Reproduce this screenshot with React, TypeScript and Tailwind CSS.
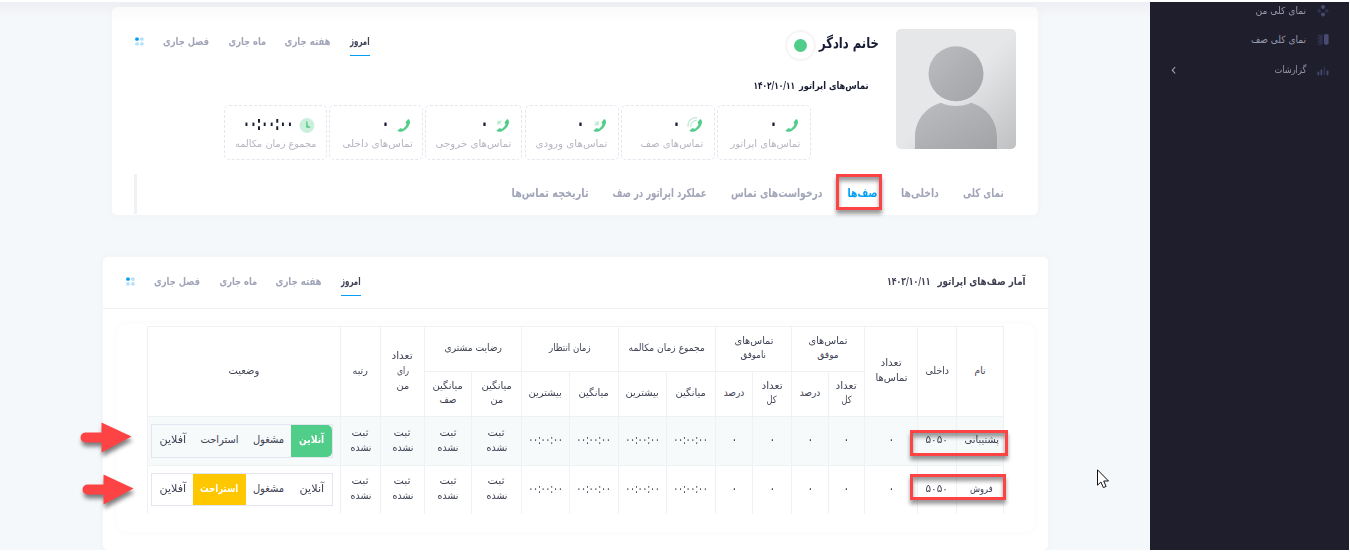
import { useLayoutEffect, useRef, useState } from "react";
import type { ReactNode } from "react";

/* One line of text, condensed or widened so that it fills w pixels. */
function Fit({ w, children, className = "" }: { w: number; children: ReactNode; className?: string }) {
  const ref = useRef<HTMLSpanElement>(null);
  const [scale, setScale] = useState(1);
  useLayoutEffect(() => {
    if (ref.current) setScale(w / ref.current.offsetWidth);
  }, [w, children]);
  return (
    <span className={"flex justify-center " + className} style={{ width: w }}>
      <span ref={ref} className="block shrink-0 whitespace-nowrap" style={{ transform: `scaleX(${scale})` }}>
        {children}
      </span>
    </span>
  );
}

function DotsIcon() {
  return (
    <svg className="h-[9px] w-[9px]" viewBox="0 0 9 9">
      <rect x="0.2" y="0.4" width="3.6" height="3.4" rx="1.3" fill="#009ef7" />
      <rect x="5.2" y="0.4" width="3.4" height="3.4" rx="1.3" fill="#b0e0fc" />
      <rect x="0.2" y="5.2" width="3.6" height="3.4" rx="1.3" fill="#b0e0fc" />
      <rect x="5.2" y="5.2" width="3.4" height="3.4" rx="1.3" fill="#b0e0fc" />
    </svg>
  );
}

function PeriodTabs() {
  return (
    <div className="flex h-[28px] gap-[19px] text-[11px] font-bold leading-[27px] text-[#a1a5b7]">
      <div className="h-[28px] border-b border-[#009ef7] text-[#3f4254]">
        <Fit w={20}>امروز</Fit>
      </div>
      <Fit w={46}>هفته جاری</Fit>
      <Fit w={38}>ماه جاری</Fit>
      <Fit w={46}>فصل جاری</Fit>
      <div className="flex h-[28px] items-center pb-px">
        <DotsIcon />
      </div>
    </div>
  );
}

type Kind = "plain" | "waves" | "in" | "out" | "clock";

function StatIcon({ kind }: { kind: Kind }) {
  if (kind === "clock")
    return (
      <svg className="h-4 w-4" viewBox="0 0 16 16">
        <circle cx="8" cy="7.500" r="7.4" fill="#cbefdb" />
        <path d="M7.200 3.200h1.200l.3 4.300 2.800 1.400-.3.8H7.200z" fill="#50cd89" />
      </svg>
    );
  return (
    <svg className="h-4 w-4 overflow-visible" viewBox="0 0 16 16">
      <path
        d="M13.200 1C14.800 1.800 15.400 3.500 14.800 5.500C13.700 9 11 12 7.500 13.400C5.600 14.100 3.500 14 2.300 12.800L5 10.500C5.700 10 6.200 10.100 6.700 10.600L7.300 11.100C9.300 10 10.800 8.400 11.600 6.300L11.100 5.600C10.600 5 10.500 4.400 11 3.700Z"
        fill="#50cd89"
      />
      {kind === "waves" && (
        <g fill="none" stroke="#b9ead0" strokeWidth="1.200" strokeLinecap="round">
          <path d="M1 8.500C.5 3.500 4.300-.7 9.600-.3" />
          <path d="M3.800 8.600C3.300 5.200 5.700 2.500 9.200 2.700" />
        </g>
      )}
      {kind === "in" && <path d="M3.500 3l3.200 3.200M7.300 3.200v3.600H3.800z" stroke="#b9ead0" strokeWidth="1" fill="#b9ead0" />}
      {kind === "out" && <path d="M7.500 6.800L4.200 3.600M3.800 6.500V3.200h3.600z" stroke="#b9ead0" strokeWidth="1" fill="#b9ead0" />}
    </svg>
  );
}

const stats: { label: string; labelW: number; value: string; valueW: number; boxW: string; kind: Kind }[] = [
  { label: "تماس‌های اپراتور", labelW: 70, value: "۰", valueW: 8, boxW: "w-[94px]", kind: "plain" },
  { label: "تماس‌های صف", labelW: 63, value: "۰", valueW: 8, boxW: "w-[94px]", kind: "waves" },
  { label: "تماس‌های ورودی", labelW: 72, value: "۰", valueW: 8, boxW: "w-[94px]", kind: "in" },
  { label: "تماس‌های خروجی", labelW: 76, value: "۰", valueW: 8, boxW: "w-[97px]", kind: "out" },
  { label: "تماس‌های داخلی", labelW: 70, value: "۰", valueW: 8, boxW: "w-[94px]", kind: "plain" },
  { label: "مجموع زمان مکالمه", labelW: 81, value: "۰۰:۰۰:۰۰", valueW: 50, boxW: "w-[103px]", kind: "clock" },
];

const tabs: [string, number][] = [
  ["نمای کلی", 41],
  ["داخلی‌ها", 38],
  ["صف‌ها", 30],
  ["درخواست‌های تماس", 92],
  ["عملکرد اپراتور در صف", 94],
  ["تاریخچه تماس‌ها", 77],
];

function Avatar() {
  return (
    <svg className="h-[120px] w-[120px] shrink-0 rounded-[5px]" viewBox="0 0 120 120">
      <defs>
        <linearGradient id="bg" x1="0" y1="0" x2="1" y2="1">
          <stop offset="0.5" stopColor="#e6e7e8" />
          <stop offset="1" stopColor="#bfc0c2" />
        </linearGradient>
        <linearGradient id="fg" x1="0" y1="0" x2="1" y2="1">
          <stop offset="0" stopColor="#bcbdc0" />
          <stop offset="1" stopColor="#a2a3a6" />
        </linearGradient>
      </defs>
      <rect width="120" height="120" fill="url(#bg)" />
      <circle cx="60" cy="44.8" r="27.5" fill="url(#fg)" />
      <path d="M19 120v-12c0-16 10-29.500 26-34.200 9 4.300 21 4.300 30 0C91 78.500 101 92 101 108v12z" fill="url(#fg)" />
    </svg>
  );
}

const Z = "۰";
const T = "۰۰:۰۰:۰۰";

type Line = [string, number];
const cell = "border border-[#eff2f5] p-0 align-middle font-normal";

function Lines({ lines, className = "leading-[15px]" }: { lines: Line[]; className?: string }) {
  return (
    <div className={"flex flex-col items-center pb-[3px] " + className}>
      {lines.map(([t, w], i) => (
        <Fit key={i} w={w} className={t === Z || t === T ? "text-[14px]" : ""}>
          {t}
        </Fit>
      ))}
    </div>
  );
}

function Th({ lines, rs, cs }: { lines: Line[]; rs?: number; cs?: number }) {
  return (
    <th className={cell} rowSpan={rs} colSpan={cs}>
      <Lines lines={lines} className={rs ? "leading-[15px]" : "leading-[14px]"} />
    </th>
  );
}

const statuses: [string, number, string][] = [
  ["آنلاین", 25, "w-[41px]"],
  ["مشغول", 31, "w-[45px]"],
  ["استراحت", 38, "w-[53px]"],
  ["آفلاین", 27, "w-[41px]"],
];

function StatusGroup({ active, tone, height }: { active: number; tone: string; height: string }) {
  return (
    <div className={"mr-[7px] flex w-[182px] border border-[#e4e6ef] text-[11px] text-[#3f4254] " + height}>
      {statuses.map(([t, w, box], i) => (
        <div key={t} className={"flex items-center justify-center pb-[2px] " + box + (i === active ? " " + tone : "")}>
          <Fit w={w}>{t}</Fit>
        </div>
      ))}
    </div>
  );
}

const NOT_SET: Line[] = [
  ["ثبت", 17],
  ["نشده", 21],
];

function Row({ name, nameW, children, shaded }: { name: string; nameW: number; children: ReactNode; shaded?: boolean }) {
  const values: Line[][] = [
    [[name, nameW]],
    [["۵۰۵۰", 22]],
    [[Z, 6]],
    [[Z, 6]],
    [[Z, 6]],
    [[Z, 6]],
    [[Z, 6]],
    [[T, 34]],
    [[T, 34]],
    [[T, 34]],
    [[T, 34]],
    NOT_SET,
    NOT_SET,
    NOT_SET,
    NOT_SET,
  ];
  return (
    <tr className={shaded ? "h-[49px] bg-[#f6fafb]" : "h-[48px]"}>
      {values.map((v, i) => (
        <td key={i} className={cell + (shaded ? "" : " border-b-0") + (i === 0 ? " pl-[3px]" : "")}>
          <Lines lines={v} />
        </td>
      ))}
      <td className={cell + (shaded ? "" : " border-b-0")}>{children}</td>
    </tr>
  );
}

function Arrow({ className }: { className: string }) {
  return (
    <svg className={"absolute h-[32px] w-[53px] overflow-visible drop-shadow-[1px_4px_2px_rgba(0,0,0,0.5)] " + className} viewBox="0 0 53 32">
      <path d="M5.500 10.500H21.500V.5l30 14-30 16V20.500H5.500a5 5 0 0 1 0-10z" fill="#fd4343" />
    </svg>
  );
}

function Mark({ className }: { className: string }) {
  return (
    <div
      className={
        "pointer-events-none absolute border-[3px] border-[#fd4343] shadow-[0_4px_4px_rgba(0,0,0,0.4),inset_0_4px_4px_rgba(0,0,0,0.4)] " + className
      }
    />
  );
}

export default function App() {
  return (
    <div
      dir="rtl"
      className="relative flex h-[552px] w-[1350px] overflow-hidden border-t-2 border-b-2 border-r border-white bg-white font-['DejaVu_Sans_Condensed','DejaVu_Sans',sans-serif]"
    >
      <aside className="h-full w-[199px] shrink-0 bg-[#1e1e2d] text-[10px] leading-[14px] text-[#9899ac]">
        <div className="mt-[2px] flex h-[14px] items-center gap-[11px] pr-5">
          <svg className="h-3 w-3" viewBox="0 0 12 12">
            <circle cx="6" cy="2" r="2" fill="#494b74" />
            <circle cx="6" cy="9.500" r="2" fill="#494b74" />
            <circle cx="2.200" cy="5.800" r="1.900" fill="#30314c" />
            <circle cx="9.800" cy="5.800" r="1.900" fill="#30314c" />
          </svg>
          <Fit w={51}>نمای کلی من</Fit>
        </div>
        <div className="mt-[15px] flex h-[14px] items-center gap-[11px] pr-5">
          <svg className="h-3 w-3" viewBox="0 0 12 12">
            <path d="M7 1.500C7 .8 7.400.3 8 .3h2.600c.6 0 1 .5 1 1.200V9.500L9.300 11.300 7 9.500z" fill="#494b74" />
            <path d="M.5.800h5v10h-5V9.500H2.500V8.300H.5V6.500H2.500V5.300H.5V3.500H2.500V2.400H.5z" fill="#30314c" />
          </svg>
          <Fit w={55}>نمای کلی صف</Fit>
        </div>
        <div className="mt-4 flex h-[14px] items-center pr-5">
          <svg className="ml-[11px] h-3 w-3" viewBox="0 0 12 12">
            <rect x="0.500" y="7.500" width="1.700" height="3.800" rx=".6" fill="#494b74" />
            <rect x="3.500" y="5.500" width="1.700" height="5.800" rx=".6" fill="#494b74" />
            <rect x="6.600" y="2.500" width="1.700" height="8.800" rx=".6" fill="#30314c" />
            <rect x="9.700" y="6.500" width="1.700" height="4.800" rx=".6" fill="#494b74" />
          </svg>
          <Fit w={32}>گزارشات</Fit>
          <svg className="mr-auto ml-[21px] h-[9px] w-[5px]" viewBox="0 0 5 9">
            <path d="M4.200 1L1.300 4.200 4.200 7.500" fill="none" stroke="#a9aabd" strokeWidth="1.100" />
          </svg>
        </div>
      </aside>

      <main className="h-full w-[1150px] shrink-0 bg-[#f5f8fb] bg-[linear-gradient(to_bottom,#eeeff4,#f5f8fb_16px)] pt-[5px]">
        <section className="mr-[112px] h-[208px] w-[926px] rounded-[5px] bg-white bg-[linear-gradient(to_bottom,#fafafa,#ffffff_16px)] pr-[22px] shadow-[0_0_10px_rgba(60,80,100,0.03)]">
          <div className="flex h-[167px] pt-[22px]">
            <Avatar />
            <div className="flex w-[526px] shrink-0 flex-col">
              <div className="flex h-[32px] items-center pr-[17px] pt-px">
                <Fit w={60} className="pb-[6px] text-[15px] font-bold leading-5 text-[#181c32]">
                  خانم دادگر
                </Fit>
                <span className="mr-[3px] flex h-[31px] w-[31px] items-center justify-center rounded-full border-2 border-[#f5f5f6] bg-white">
                  <span className="h-[13px] w-[13px] rounded-full bg-[#50cd89]" />
                </span>
              </div>
              <div className="mt-4 flex h-4 items-center gap-1 pr-[27px] text-[10px] font-bold text-[#181c32]">
                <Fit w={70}>تماس‌های اپراتور</Fit>
                <Fit w={42}>
                  <bdi dir="ltr">۱۴۰۲/۱۰/۱۱</bdi>
                </Fit>
              </div>
              <div className="mt-3 flex gap-[2.200px] pr-[85px]">
                {stats.map((s) => (
                  <div key={s.label} className={"h-[55px] shrink-0 rounded-[5px] border border-dashed border-[#e4e6ef] px-[10px] pt-[11px] " + s.boxW}>
                    <div className="flex h-[17px] items-center gap-[6px] pr-px">
                      <StatIcon kind={s.kind} />
                      <Fit w={s.valueW} className="pb-[5px] text-[20px] font-bold leading-[17px] text-[#181c32]">
                        <bdi dir="ltr">{s.value}</bdi>
                      </Fit>
                    </div>
                    <Fit w={s.labelW} className="pt-px text-[10px] leading-[17px] text-[#b5b5c3]">
                      {s.label}
                    </Fit>
                  </div>
                ))}
              </div>
            </div>
            <div className="-mt-px">
              <PeriodTabs />
            </div>
          </div>
          <div className="flex h-[40px] items-center gap-6 pr-3 text-[12px] font-bold leading-4 text-[#a1a5b7]">
            {tabs.map(([t, w], i) => (
              <Fit key={t} w={w} className={"pb-[2px]" + (i === 2 ? " text-[#009ef7]" : "")}>
                {t}
              </Fit>
            ))}
            <div className="mr-auto ml-[22px] h-[40px] w-[3px] bg-[#eff2f5]" />
          </div>
        </section>

        <section className="mr-[102px] mt-[42px] h-[293px] w-[945px] rounded-[5px] bg-white shadow-[0_0_10px_rgba(60,80,100,0.03)]">
          <div className="flex h-[52px] justify-between border-b border-[#eff2f5] pr-[22px] pl-[23px]">
            <div className="flex h-[50px] items-center gap-[7px] text-[11px] font-bold text-[#3f4254]">
              <Fit w={88}>آمار صف‌های اپراتور</Fit>
              <Fit w={44}>
                <bdi dir="ltr">۱۴۰۲/۱۰/۱۱</bdi>
              </Fit>
            </div>
            <div className="pt-[11px]">
              <PeriodTabs />
            </div>
          </div>
          <div className="mx-auto mt-[15px] h-[208px] w-[917px] rounded-lg pr-[30px] pt-[2px] shadow-[0_0_6px_rgba(80,90,110,0.035)]">
            <table className="w-[857px] table-fixed border-collapse text-center text-[10px] text-[#3f4254]">
              <colgroup>
                <col className="w-[47px]" />
                <col className="w-[39px]" />
                <col className="w-[53px]" />
                <col className="w-[36px]" />
                <col className="w-[37px]" />
                <col className="w-[39px]" />
                <col className="w-[37px]" />
                <col className="w-[49px]" />
                <col className="w-[48px]" />
                <col className="w-[49px]" />
                <col className="w-[48px]" />
                <col className="w-[50px]" />
                <col className="w-[47px]" />
                <col className="w-[44px]" />
                <col className="w-[40px]" />
                <col className="w-[193px]" />
              </colgroup>
              <thead>
                <tr className="h-[45px]">
                  <Th rs={2} lines={[["نام", 11]]} />
                  <Th rs={2} lines={[["داخلی", 24]]} />
                  <Th rs={2} lines={[["تعداد", 21], ["تماس‌ها", 32]]} />
                  <Th cs={2} lines={[["تماس‌های", 39], ["موفق", 21]]} />
                  <Th cs={2} lines={[["تماس‌های", 39], ["ناموفق", 26]]} />
                  <Th cs={2} lines={[["مجموع زمان مکالمه", 76]]} />
                  <Th cs={2} lines={[["زمان انتظار", 42]]} />
                  <Th cs={2} lines={[["رضایت مشتری", 58]]} />
                  <Th rs={2} lines={[["تعداد", 21], ["رای", 12], ["من", 13]]} />
                  <Th rs={2} lines={[["رتبه", 15]]} />
                  <Th rs={2} lines={[["وضعیت", 31]]} />
                </tr>
                <tr className="h-[45px]">
                  <Th lines={[["تعداد", 21], ["کل", 10]]} />
                  <Th lines={[["درصد", 21]]} />
                  <Th lines={[["تعداد", 21], ["کل", 10]]} />
                  <Th lines={[["درصد", 21]]} />
                  <Th lines={[["میانگین", 30]]} />
                  <Th lines={[["بیشترین", 33]]} />
                  <Th lines={[["میانگین", 30]]} />
                  <Th lines={[["بیشترین", 33]]} />
                  <Th lines={[["میانگین", 30], ["من", 13]]} />
                  <Th lines={[["میانگین", 30], ["صف", 17]]} />
                </tr>
              </thead>
              <tbody>
                <Row name="پشتیبانی" nameW={34} shaded>
                  <StatusGroup active={0} tone="rounded-r-[5px] bg-[#50cd89] font-bold text-white" height="h-[34px]" />
                </Row>
                <Row name="فروش" nameW={23}>
                  <StatusGroup active={2} tone="bg-[#ffc700] font-bold text-white" height="h-[33px]" />
                </Row>
              </tbody>
            </table>
          </div>
        </section>
      </main>

      <Mark className="left-[836px] top-[172px] h-[36px] w-[46px]" />
      <Mark className="left-[910px] top-[428px] h-[26px] w-[98px]" />
      <Mark className="left-[910px] top-[472px] h-[26px] w-[96px]" />
      <Arrow className="left-[80px] top-[420px]" />
      <Arrow className="left-[82px] top-[472px]" />
      <svg className="absolute left-[1097px] top-[467px] h-[20px] w-[13px]" viewBox="0 0 13 20">
        <path d="M.5.800v15.400l3.400-3.200 2.500 5.600 2.700-1.200-2.400-5.400h4.800z" fill="#fff" stroke="#111" strokeWidth="1" />
      </svg>
    </div>
  );
}
